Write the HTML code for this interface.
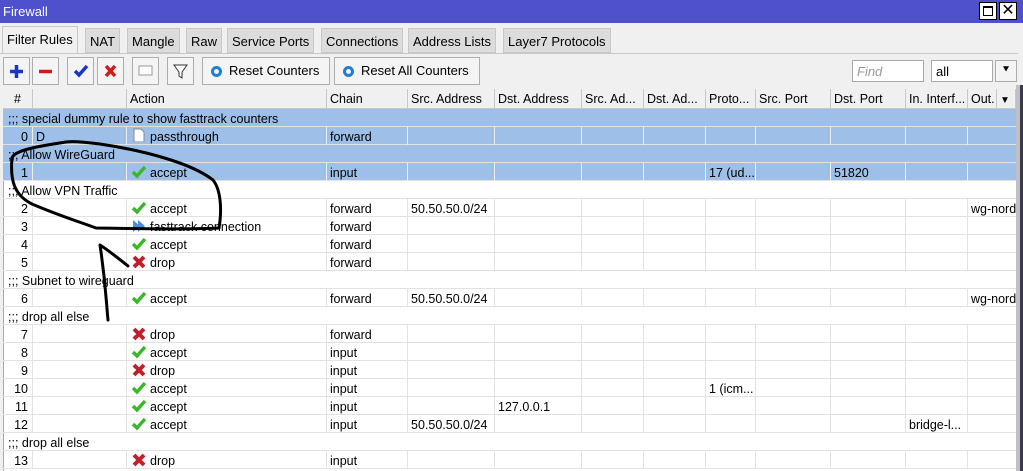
<!DOCTYPE html>
<html><head><meta charset="utf-8"><style>
*{margin:0;padding:0;box-sizing:border-box}
body{width:1023px;height:471px;overflow:hidden;background:#f0f0f0;font-family:"Liberation Sans",sans-serif;font-size:12px;color:#000;position:relative}
.a{position:absolute}
.title{left:0;top:0;width:1023px;height:23px;background:#4f50cb;color:#fff;font-size:13px;padding:4px 0 0 3px}
.tab{top:28px;height:25px;background:#dcdcdc;border:1px solid #c8c8c8;padding:5px 4px 0;font-size:13px;white-space:nowrap}
.btn{top:57px;height:28px;background:#f4f4f4;border:1px solid #adadad}
.row{left:3px;width:1013px;height:18px;border-bottom:1px solid #e2e2e2}
.c{position:absolute;top:0;height:18px;padding:3px 0 0 3px;white-space:nowrap;overflow:hidden;border-right:1px solid #e2e2e2;font-size:12.5px}
.sel{background:#9dbfe8}
.sel .c{border-right-color:#e8f0fa}
.hd .c{border-right:1px solid #c8c8c8;height:20px;padding-top:3px}
</style></head><body>
<div class="a title">Firewall</div>
<div class="a" style="left:979px;top:2px;width:18px;height:18px;border:1px solid #000;background:#fff"><div style="margin:3px;width:10px;height:10px;border:1px solid #000;border-top-width:2px"></div></div>
<div class="a" style="left:999px;top:2px;width:18px;height:18px;border:1px solid #000;background:#fff;font-size:16px;line-height:16px;text-align:center">✕</div>

<div class="a tab" style="left:2px;top:26px;height:28px;background:#f0f0f0;border-bottom:none">Filter Rules</div>
<div class="a tab" style="left:85px">NAT</div>
<div class="a tab" style="left:127px">Mangle</div>
<div class="a tab" style="left:186px">Raw</div>
<div class="a tab" style="left:227px">Service Ports</div>
<div class="a tab" style="left:321px">Connections</div>
<div class="a tab" style="left:408px">Address Lists</div>
<div class="a tab" style="left:503px">Layer7 Protocols</div>
<div class="a" style="left:0;top:53px;width:1018px;height:1px;background:#c8c8c8"></div>

<div class="a btn" style="left:3px;width:27px"><svg width="25" height="26"><path d="M12.5 7v13M6 13.5h13" stroke="#1a36c8" stroke-width="3.5"/></svg></div>
<div class="a btn" style="left:32px;width:27px"><svg width="25" height="26"><path d="M6 13.5h13" stroke="#d21a1a" stroke-width="3.5"/></svg></div>
<div class="a btn" style="left:67px;width:27px"><svg width="25" height="26"><path d="M7 13l4 4 8-9" stroke="#1a36c8" stroke-width="3.5" fill="none"/></svg></div>
<div class="a btn" style="left:97px;width:27px"><svg width="25" height="26"><path d="M8 8l9 10M17 8l-9 10" stroke="#d21a1a" stroke-width="3.5"/></svg></div>
<div class="a btn" style="left:132px;width:27px"><svg width="25" height="26"><rect x="6" y="8" width="13" height="9" fill="#fff" stroke="#999"/></svg></div>
<div class="a btn" style="left:167px;width:27px"><svg width="25" height="26"><path d="M6 7h13l-5 7v6l-3-2v-4z" fill="#fff" stroke="#333"/></svg></div>
<div class="a btn" style="left:202px;width:128px;font-size:13px;padding:5px 0 0 26px">Reset Counters<div class="a" style="left:8px;top:8px;width:11px;height:11px;border-radius:50%;border:3px solid #1e7fd6"></div></div>
<div class="a btn" style="left:334px;width:146px;font-size:13px;padding:5px 0 0 26px">Reset All Counters<div class="a" style="left:8px;top:8px;width:11px;height:11px;border-radius:50%;border:3px solid #1e7fd6"></div></div>
<div class="a" style="left:852px;top:60px;width:72px;height:22px;background:#fff;border:1px solid #aaa;color:#999;font-style:italic;font-size:13px;padding:3px 4px">Find</div>
<div class="a" style="left:931px;top:60px;width:62px;height:22px;background:#fff;border:1px solid #aaa;font-size:13px;padding:3px 4px">all</div>
<div class="a" style="left:995px;top:60px;width:22px;height:22px;background:#f4f4f4;border:1px solid #aaa;text-align:center;font-size:11px;padding-top:3px">⯆</div>

<div class="a" style="left:3px;top:89px;width:1013px;height:382px;background:#fff;border-left:1px solid #aaa"></div>
<div class="a" style="left:1016px;top:85px;width:4px;height:386px;background:#c0c0c0"></div>
<div class="a" style="left:1020px;top:85px;width:3px;height:386px;background:#3a3a4a"></div>

<div id="t"></div>
<svg class="a" style="left:0;top:0" width="1023" height="471"><g fill="none" stroke="#000" stroke-width="3" stroke-linecap="round">
<path d="M66 142C40 146 14 150 12 158C10 180 14 195 32 204C60 216 80 222 96 228C150 229 200 229 219 228C222 210 221 190 213 180C190 162 140 150 100 144C85 142 72 141 66 142"/>
<path d="M108 320C106 300 106 285 100 245M100 245C108 250 118 258 128 266"/>
</g></svg>
<script>
var cols=[[0,30],[30,94],[124,200],[324,81],[405,87],[492,87],[579,62],[641,62],[703,50],[753,75],[828,75],[903,62],[965,48]];
var hcols=cols.slice(0,12).concat([[965,29],[994,19]]);
var H=["#","","Action","Chain","Src. Address","Dst. Address","Src. Ad...","Dst. Ad...","Proto...","Src. Port","Dst. Port","In. Interf...","Out.",""];
var ic={a:'<svg width="16" height="14" style="position:absolute;left:4px;top:2px"><path d="M2 7l4 4 8-9" stroke="#3cb72c" stroke-width="3.5" fill="none"/></svg>',
d:'<svg width="16" height="14" style="position:absolute;left:4px;top:2px"><path d="M3 2l10 10M13 2L3 12" stroke="#c0202a" stroke-width="4"/></svg>',
f:'<svg width="16" height="14" style="position:absolute;left:4px;top:2px"><path d="M2 1l7 6-7 6zM7 1l7 6-7 6z" fill="#4a90d8"/></svg>',
p:'<svg width="16" height="14" style="position:absolute;left:4px;top:1px"><path d="M3 1h7l3 3v10H3z" fill="#fff" stroke="#888"/></svg>'};
var R=[["c",";;; special dummy rule to show fasttrack counters",1],
["r",["0","D","p:passthrough","forward"],1],
["c",";;; Allow WireGuard",1],
["r",["1","","a:accept","input","","","","","17 (ud...","","51820"],1],
["c",";;; Allow VPN Traffic"],
["r",["2","","a:accept","forward","50.50.50.0/24","","","","","","","","wg-nord"]],
["r",["3","","f:fasttrack connection","forward"]],
["r",["4","","a:accept","forward"]],
["r",["5","","d:drop","forward"]],
["c",";;; Subnet to wireguard"],
["r",["6","","a:accept","forward","50.50.50.0/24","","","","","","","","wg-nord"]],
["c",";;; drop all else"],
["r",["7","","d:drop","forward"]],
["r",["8","","a:accept","input"]],
["r",["9","","d:drop","input"]],
["r",["10","","a:accept","input","","","","","1 (icm..."]],
["r",["11","","a:accept","input","","127.0.0.1"]],
["r",["12","","a:accept","input","50.50.50.0/24","","","","","","","bridge-l..."]],
["c",";;; drop all else"],
["r",["13","","d:drop","input"]]];
var h='<div class="a row hd" style="top:89px;height:20px;background:#f0f0f0;border-bottom:1px solid #c8c8c8">';
hcols.forEach(function(c,i){h+='<div class="c" style="left:'+c[0]+'px;width:'+c[1]+'px;'+(i==0?'text-align:center;padding-left:0':'')+'">'+H[i]+(i==13?'<span style="font-size:10px">▼</span>':'')+'</div>'});
h+='</div>';
R.forEach(function(r,k){var y=109+k*18;
h+='<div class="a row'+(r[2]?' sel':'')+'" style="top:'+y+'px">';
if(r[0]=="c"){h+='<div class="c" style="left:0;width:1000px;padding-left:5px;border:none">'+r[1]+'</div>'}
else{cols.forEach(function(c,i){var v=r[1][i]||"",st='left:'+c[0]+'px;width:'+c[1]+'px;';
if(i==0)st+='text-align:right;padding-right:4px;';
if(i==12)st+='border-right:none;';
if(i==2&&v){var p=v.split(':');v=ic[p[0]]+'<span style="margin-left:20px">'+p[1]+'</span>';st+='position:absolute;'}
h+='<div class="c" style="'+st+'">'+v+'</div>'})}
h+='</div>'});
document.getElementById('t').innerHTML=h;
</script>
</body></html>
